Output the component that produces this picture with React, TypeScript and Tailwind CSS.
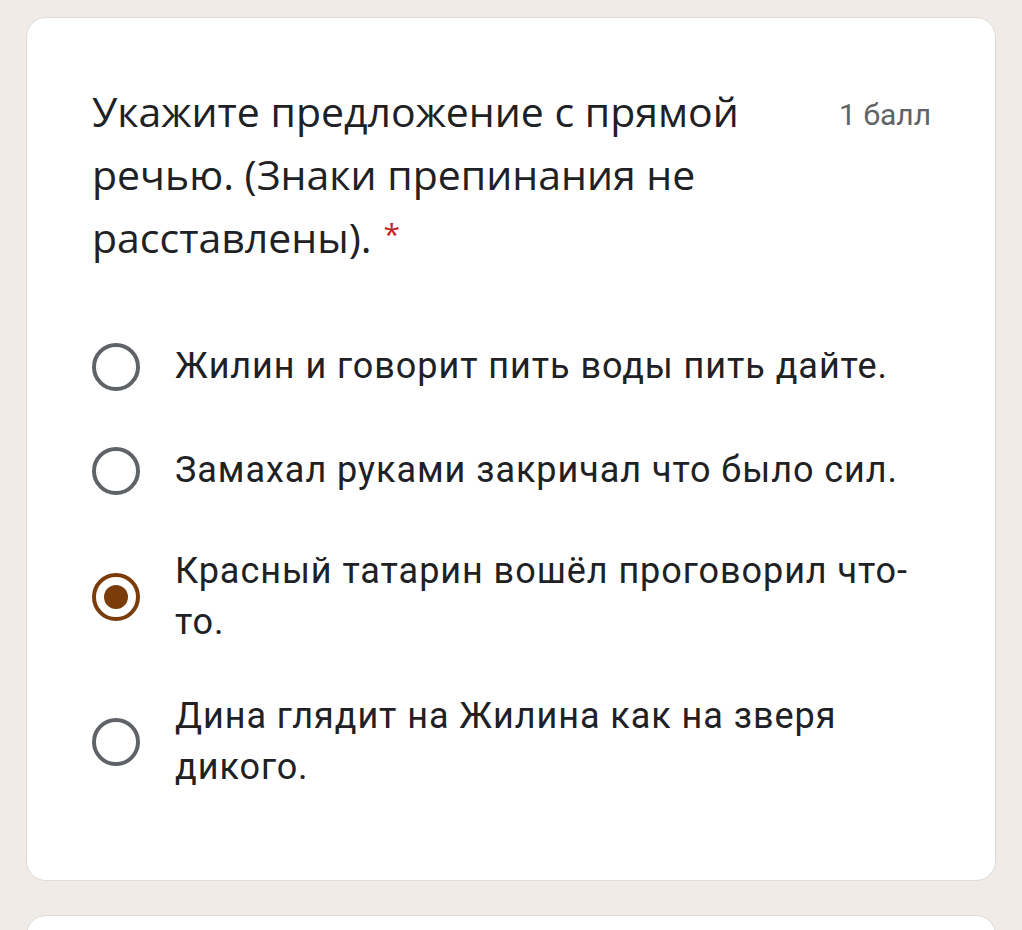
import { useState } from 'react';

const OPTIONS = [
  { text: 'Жилин и говорит пить воды пить дайте.', gap: 'mt-0' },
  { text: 'Замахал руками закричал что было сил.', gap: 'mt-[53px]' },
  { text: 'Красный татарин вошёл проговорил что-то.', gap: 'mt-[50px]' },
  { text: 'Дина глядит на Жилина как на зверя дикого.', gap: 'mt-[43px]' },
];

function Radio({ checked }: { checked: boolean }) {
  return (
    <div
      className={`w-[48px] h-[48px] shrink-0 rounded-full border-[4px] flex items-center justify-center ${
        checked ? 'border-[#7b3c0b]' : 'border-[#5f6368]'
      }`}
    >
      {checked && <div className="w-[24px] h-[24px] rounded-full bg-[#7b3c0b]" />}
    </div>
  );
}

export default function App() {
  const [selected, setSelected] = useState(2);

  return (
    <div className="h-[930px] bg-[#f0ebe6] pt-[17px] px-[26px] flex flex-col gap-[34px] overflow-hidden">
      <div className="bg-white rounded-[20px] border border-[#dedbd8] pl-[65px] pr-[64px] pt-[62px] pb-[87px] shrink-0">
        {/* Title */}
        <div className="flex items-start gap-[40px]">
          <h1 className="flex-1 text-[41px] leading-[63px] text-[#202124] font-['Open_Sans',sans-serif]">
            Укажите предложение с прямой речью. (Знаки препинания не расставлены).
            <span className="inline-block ml-[12px] text-[#c5221f] text-[30px] leading-none align-top pt-[13px]">*</span>
          </h1>
          <span className="pt-[3px] text-[30px] leading-[63px] text-[#5f6368] font-['Roboto',sans-serif] whitespace-nowrap">
            1 балл
          </span>
        </div>

        {/* Options */}
        <div className="mt-[72px] flex flex-col">
          {OPTIONS.map((o, i) => (
            <button
              key={o.text}
              onClick={() => setSelected(i)}
              className={`flex items-center gap-[35px] text-left ${o.gap}`}
            >
              <Radio checked={selected === i} />
              <span className="flex-1 text-[36px] leading-[51px] text-[#202124] font-['Roboto',sans-serif] tracking-[0.95px]">
                {o.text}
              </span>
            </button>
          ))}
        </div>
      </div>

      <div className="bg-white rounded-[20px] border border-[#dedbd8] h-[200px] shrink-0" />
    </div>
  );
}
